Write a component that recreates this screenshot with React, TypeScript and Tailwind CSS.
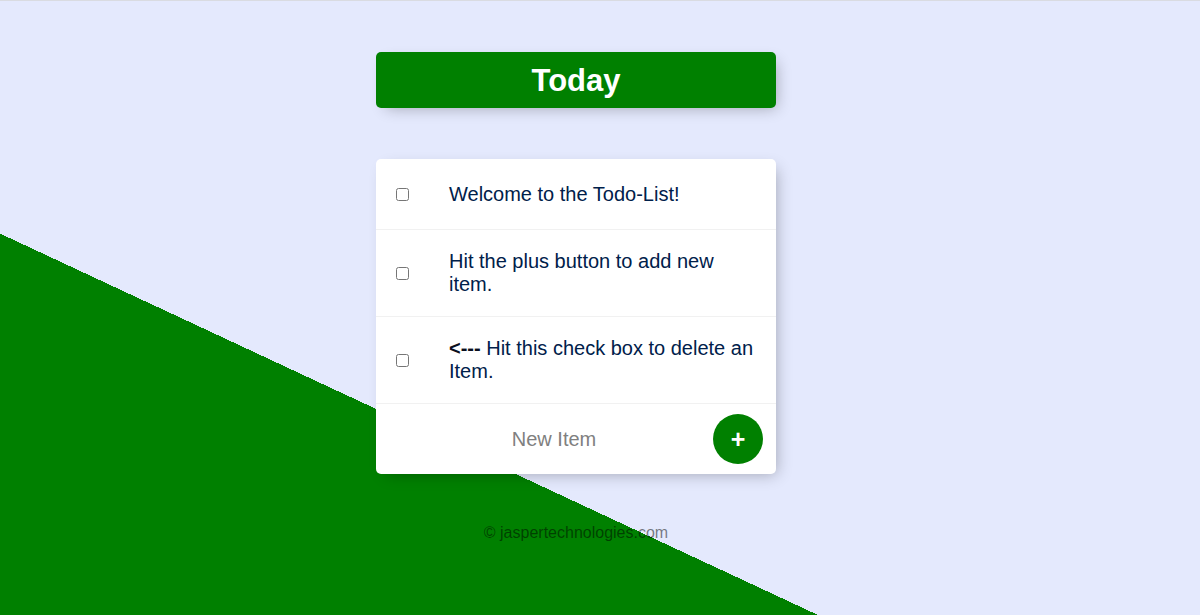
import React from "react";

const items = [
  { id: 1, content: <>Welcome to the Todo-List!</> },
  { id: 2, content: <>Hit the plus button to add new item.</> },
  {
    id: 3,
    content: (
      <>
        <span className="font-bold text-[#0a0f1e]">&lt;---</span> Hit this check box to delete an Item.
      </>
    ),
  },
];

export default function App() {
  return (
    <div
      className="h-[615px] w-full overflow-hidden border-t border-[#d9dbe1] bg-[#E4E9FD] bg-[linear-gradient(25deg,#008000_32.5%,#E4E9FD_32.5%)] font-['Liberation_Sans',Arial,sans-serif]"
    >
      <div className="flex w-[1152px] flex-col items-center">
        <div className="mt-[51px] flex h-[56px] w-[400px] items-center justify-center rounded-[5px] bg-[#008000] shadow-[5px_5px_15px_-5px_rgba(0,0,0,0.3)]">
          <h1 className="text-[31px] font-bold leading-none text-white">Today</h1>
        </div>

        <div className="mt-[51px] w-[400px] rounded-[5px] bg-white shadow-[5px_5px_15px_-5px_rgba(0,0,0,0.3)]">
          {items.map((it) => (
            <div key={it.id} className="flex min-h-[71px] items-center border-b border-[#F1F1F1]">
              <input type="checkbox" className="m-[20px] h-[13px] w-[13px] shrink-0" />
              <p className="m-0 p-[20px] text-[20px] leading-[23px] font-extralight text-[#00204a]">
                {it.content}
              </p>
            </div>
          ))}
          <div className="flex h-[70px] items-center">
            <input
              type="text"
              placeholder="New Item"
              className="ml-[14px] h-[60px] w-[318px] border-none pl-[10px] text-center text-[20px] font-extralight outline-none placeholder:text-[grey] placeholder:opacity-100"
            />
            <button className="ml-[5px] flex h-[50px] w-[50px] items-center justify-center rounded-full bg-[#008000] text-[25px] font-bold leading-none text-white">
              +
            </button>
          </div>
        </div>

        <footer className="mt-[50px] text-center text-[16px] leading-[18px] text-[rgba(0,0,0,0.5)]">
          © jaspertechnologies.com
        </footer>
      </div>
    </div>
  );
}
